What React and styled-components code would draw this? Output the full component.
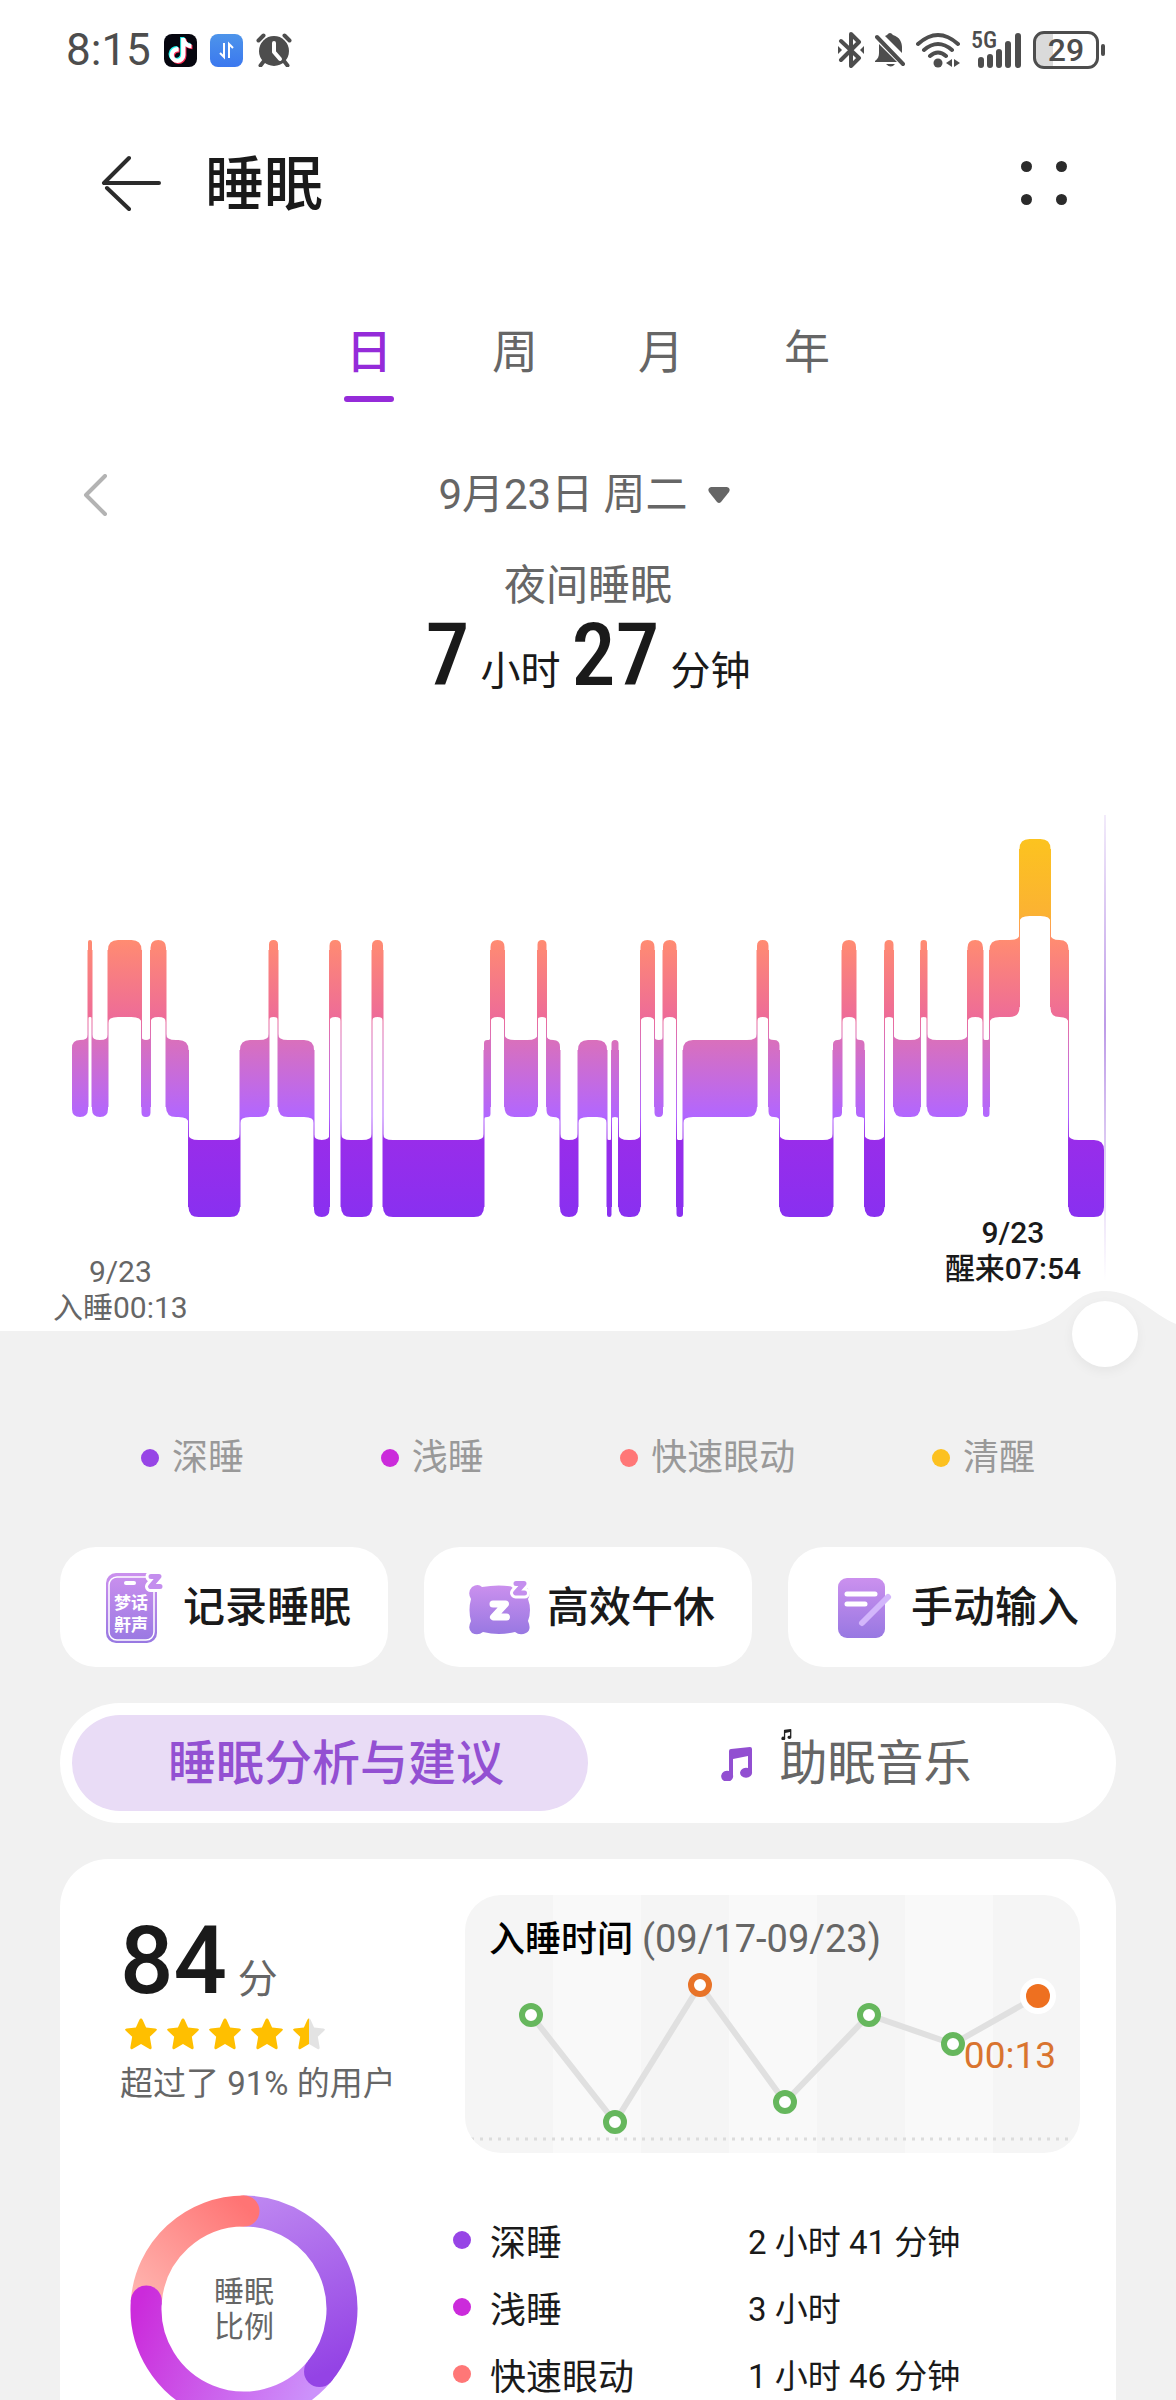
import { useState } from "react";
import styled, { createGlobalStyle, ThemeProvider } from "styled-components";
import { FaTiktok } from "react-icons/fa";

const theme = {
    font: `Roboto, "Noto Sans CJK SC", sans-serif`,
    narrow: `"Roboto Condensed", "Liberation Sans Narrow", Roboto, sans-serif`,
    colors: {
        page: "#f1f1f1",
        panel: "#fff",
        text: "#1a1a1a",
        status: "#4d4d4d",
        muted: "#666",
        faint: "#999",
        accent: "#952bd9",
        pill: "#e9dcf6",
        pillText: "#9350d2",
        deep: "#9745e6",
        light: "#cb2bdb",
        rem: "#ff7777",
        awake: "#fcc120",
    },
};

const GlobalStyle = createGlobalStyle`
    * { box-sizing: border-box; }
    body { margin: 0; }
    button { border: 0; padding: 0; background: none; font: inherit; color: inherit; cursor: pointer; }
    h1, h2, p, dl, dd, dt, ul { margin: 0; padding: 0; font-weight: inherit; }
    svg { display: block; }
`

const Screen = styled.div`
    height: 100vh;
    overflow-y: auto;
    scrollbar-width: none;
    background: ${({ theme }) => theme.colors.page};
    color: ${({ theme }) => theme.colors.text};
    font-family: ${({ theme }) => theme.font};
`
const Panel = styled.div`
    background: ${({ theme }) => theme.colors.panel};
`

/* ---------- status bar ---------- */

const StatusBar = styled.div`
    height: 100px;
    padding: 0 71px 0 66px;
    display: flex;
    align-items: center;
    justify-content: space-between;
    color: ${({ theme }) => theme.colors.status};
`
const StatusGroup = styled.div`
    display: flex;
    align-items: center;
    gap: ${({ $gap }) => $gap}px;
`
const Clock = styled.span`
    font-size: 44px;
    line-height: 48px;
`
const AppBadge = styled.span`
    width: 33px;
    height: 33px;
    border-radius: 8px;
    display: grid;
    place-items: center;
    background: ${({ $bg }) => $bg};
    & > svg { grid-area: 1 / 1; }
`
const Layer = styled(FaTiktok)`
    transform: translate(${({ $shift }) => `${$shift}px, ${$shift}px`});
    width: 25px;
    height: 25px;
`
const Battery = styled.span`
    display: flex;
    align-items: center;
    gap: 2px;
`
const BatteryCell = styled.span`
    width: 66px;
    height: 38px;
    border: 3px solid ${({ theme }) => theme.colors.status};
    border-radius: 11px;
    display: grid;
    place-items: center;
    font-size: 32px;
    line-height: 32px;
    font-weight: 500;
    background: linear-gradient(90deg, #dadada 29%, #fff 29%);
`
const BatteryTip = styled.span`
    width: 4px;
    height: 12px;
    border-radius: 2px;
    background: ${({ theme }) => theme.colors.status};
`

const TikTok = () => (
    <AppBadge $bg="#06060f">
        <Layer $shift={-1} color="#25f4ee" />
        <Layer $shift={1} color="#fe2c55" />
        <Layer $shift={0} color="#fff" />
    </AppBadge>
)

const Transfer = () => (
    <AppBadge $bg="linear-gradient(#4d94ea, #3b78ef)">
        <svg width="33" height="33" viewBox="0 0 33 33" fill="none" stroke="#fff" strokeWidth="2">
            <path d="M14 9v14l-4-4M19 24V10l4 4" />
        </svg>
    </AppBadge>
)

const Alarm = () => (
    <svg width="36" height="34" viewBox="0 0 36 34">
        <circle cx="18" cy="18" r="15" fill="#4d4d4d" />
        <path d="M6.500 6.500 1 12M29.500 6.500 35 12" stroke="#fff" strokeWidth="2" />
        <path d="M2.500 7.500 7.500 2.500M33.500 7.500 28.500 2.500M8 28l-3.500 4.500M28 28l3.500 4.500" stroke="#4d4d4d" strokeWidth="4" strokeLinecap="round" />
        <path d="M18 10v9l6 7" stroke="#fff" strokeWidth="4" strokeLinecap="round" strokeLinejoin="round" fill="none" />
    </svg>
)

const Bluetooth = () => (
    <svg width="26" height="36" viewBox="0 0 26 36" fill="none" stroke="#4d4d4d" strokeWidth="4" strokeLinecap="round" strokeLinejoin="round">
        <path d="M3 9l18 17-8 8V2l8 8L3 28" />
        <path d="M0 14l4 4-4 4zM26 14l-4 4 4 4z" fill="#4d4d4d" stroke="none" />
    </svg>
)

const BellOff = () => (
    <svg width="30" height="36" viewBox="0 0 30 36" fill="#4d4d4d">
        <path d="M12 3q3-4 6 0c7 2 9 8 9 12v6L10 4zM4 12v9c0 3-1 6-4 8v1h22zM11 32h9q-4 5-9 0z" />
        <path d="M2 5l26 27" stroke="#4d4d4d" strokeWidth="4" strokeLinecap="round" />
    </svg>
)

const Wifi = () => (
    <svg width="44" height="36" viewBox="0 0 44 36" fill="none" stroke="#4d4d4d" strokeWidth="4" strokeLinecap="round">
        <path d="M2 12Q22-6 42 12M8 18Q22 6 36 18M14 24Q22 17 30 24" />
        <circle cx="22" cy="31" r="4.500" fill="#4d4d4d" stroke="none" />
        <path d="M36 27v8l-6-4zM38 27v8l6-4z" fill="#4d4d4d" stroke="none" />
    </svg>
)

const SignalBox = styled.span`
    position: relative;
    & > span {
        position: absolute;
        top: -4px;
        left: 0;
        font-family: ${({ theme }) => theme.narrow};
        font-size: 24px;
        line-height: 24px;
        font-weight: 500;
    }
`

const Signal = () => (
    <SignalBox>
        <svg width="51" height="36" viewBox="0 0 51 36">
            <path d="M10 28v5M19 25v8M28 20v13M37 12v21M47 4v29" stroke="#4d4d4d" strokeWidth="6" strokeLinecap="round" />
        </svg>
        <span>5G</span>
    </SignalBox>
)

/* ---------- header ---------- */

const Header = styled.header`
    height: 166px;
    padding: 0 101px;
    display: flex;
    align-items: center;
    gap: 44px;
`
const Title = styled.h1`
    flex: 1;
    padding-top: 4px;
    font-size: 59px;
    line-height: 72px;
    font-weight: 500;
`
const Dots = styled.span`
    display: grid;
    grid-template-columns: 11px 11px;
    gap: 22px 24px;
    padding: 6px 8px;
    & > i { width: 11px; height: 11px; border-radius: 50%; background: #2b2b2b; }
`

/* ---------- tabs and date ---------- */

const Tabs = styled.nav`
    padding-top: 54px;
    display: flex;
    justify-content: center;
    gap: 96px;
`
const Tab = styled.button`
    width: 50px;
    font-size: 46px;
    line-height: 64px;
    font-weight: ${({ $active }) => ($active ? 500 : 400)};
    color: ${({ theme, $active }) => ($active ? theme.colors.accent : theme.colors.muted)};
    &::after {
        content: "";
        display: block;
        height: 6px;
        margin-top: 12px;
        border-radius: 3px;
        background: ${({ $active }) => ($active ? "currentColor" : "transparent")};
    }
`
const DateRow = styled.div`
    margin-top: 63px;
    padding: 0 90px 0 82px;
    height: 60px;
    display: grid;
    grid-template-columns: 26px 1fr 26px;
    align-items: center;
    color: ${({ theme }) => theme.colors.muted};
`
const DateButton = styled.button`
    display: flex;
    align-items: center;
    justify-content: center;
    gap: 20px;
    font-size: 42px;
    line-height: 60px;
`
const Summary = styled.section`
    padding-top: 31px;
    height: 286px;
    text-align: center;
`
const SummaryLabel = styled.h2`
    font-size: 42px;
    line-height: 60px;
    color: ${({ theme }) => theme.colors.muted};
`
const Duration = styled.p`
    display: flex;
    justify-content: center;
    align-items: baseline;
    gap: 11px;
    font-size: 40px;
    line-height: 78px;
`
const BigNumber = styled.strong`
    font-family: ${({ theme }) => theme.narrow};
    font-size: 88px;
    font-weight: 500;
`

/* ---------- stage chart ---------- */

const ChartBox = styled.section`
    position: relative;
`
const ChartLabel = styled.p`
    position: absolute;
    top: ${({ $top }) => $top}px;
    font-size: 30px;
    line-height: 36px;
    text-align: center;
`
const StartLabel = styled(ChartLabel)`
    left: 53px;
    color: ${({ theme }) => theme.colors.muted};
`
const EndLabel = styled(ChartLabel)`
    right: 95px;
    font-weight: 500;
`
const Handle = styled.button`
    position: absolute;
    right: 38px;
    bottom: -36px;
    width: 66px;
    height: 66px;
    border-radius: 50%;
    background: #fff;
    box-shadow: 0 4px 12px rgba(0, 0, 0, 0.05);
`

const STAGE_TOP = { awake: 28, rem: 129, light: 229, deep: 329 };
const STAGE_HEIGHT = 77;
const START_X = 72;

// [stage, right edge]; each block begins where the previous one ends
const stages = [
    ["light", 88], ["rem", 92], ["light", 108], ["rem", 141.500], ["light", 150.500], ["rem", 166],
    ["light", 188.500], ["deep", 240], ["light", 269], ["rem", 278], ["light", 314], ["deep", 329.500],
    ["rem", 341], ["deep", 372], ["rem", 383], ["deep", 484], ["light", 490.500], ["rem", 504.500],
    ["light", 537.500], ["rem", 546.500], ["light", 560], ["deep", 578], ["light", 607], ["deep", 611.500],
    ["light", 618.500], ["deep", 640.500], ["rem", 654.500], ["light", 663], ["rem", 676.500], ["deep", 683],
    ["light", 757], ["rem", 768.500], ["light", 779.500], ["deep", 833], ["light", 842], ["rem", 856],
    ["light", 864.500], ["deep", 884.500], ["rem", 893.500], ["light", 920.500], ["rem", 927], ["light", 967.500],
    ["rem", 983], ["light", 989.500], ["rem", 1019.500], ["awake", 1050.500], ["rem", 1068.500], ["deep", 1104],
];

const blocks = stages.map(([stage, x1], i) => ({
    x0: i ? stages[i - 1][1] : START_X,
    x1,
    top: STAGE_TOP[stage],
}));

// Free corners are rounded inwards, corners next to a connector flare towards it
const blockPath = ({ x0, x1, top }, prev, next) => {
    const r = Math.min(10, (x1 - x0) / 2);
    const flare = Math.min(6, r * 0.7);
    const bottom = top + STAGE_HEIGHT;
    const topY = (side) => (side && side.top < top ? top - flare : top + r);
    const bottomY = (side) => (side && side.top > top ? bottom + flare : bottom - r);
    return `M${x0} ${topY(prev)}Q${x0} ${top} ${x0 + r} ${top}H${x1 - r}Q${x1} ${top} ${x1} ${topY(next)}`
        + `V${bottomY(next)}Q${x1} ${bottom} ${x1 - r} ${bottom}H${x0 + r}Q${x0} ${bottom} ${x0} ${bottomY(prev)}Z`;
}

const StageChart = () => (
    <svg width="100%" viewBox="0 0 1176 520">
        <defs>
            <linearGradient id="stage" gradientUnits="userSpaceOnUse" x1="0" y1="28" x2="0" y2="405">
                <stop offset="0" stopColor="#fcc31f" />
                <stop offset="0.2" stopColor="#fbb233" />
                <stop offset="0.27" stopColor="#ff8b72" />
                <stop offset="0.47" stopColor="#ee6c97" />
                <stop offset="0.535" stopColor="#d970bc" />
                <stop offset="0.735" stopColor="#b266ff" />
                <stop offset="0.8" stopColor="#982dea" />
                <stop offset="1" stopColor="#8930f0" />
            </linearGradient>
            <linearGradient id="cursor" x1="0" y1="0" x2="0" y2="1">
                <stop offset="0" stopColor="#a87ae0" stopOpacity="0.15" />
                <stop offset="0.45" stopColor="#a87ae0" stopOpacity="0.75" />
                <stop offset="1" stopColor="#a87ae0" stopOpacity="0" />
            </linearGradient>
        </defs>
        {blocks.slice(1).map((b, i) => {
            const top = Math.min(b.top, blocks[i].top) + 10;
            const bottom = Math.max(b.top, blocks[i].top) + STAGE_HEIGHT - 10;
            return <rect key={b.x0} x={b.x0 - 0.5} y={top} width="1" height={bottom - top} fill="url(#stage)" />
        })}
        <path fill="url(#stage)" d={blocks.map((b, i) => blockPath(b, blocks[i - 1], blocks[i + 1])).join("")} />
        <rect x="1104" y="4" width="2" height="466" fill="url(#cursor)" />
        <path fill="#f1f1f1" d="M0 520H1000C1072 520 1064 480 1105 480C1136 480 1152 503 1176 513V521H0Z" />
    </svg>
)

/* ---------- legend and shortcuts ---------- */

const Legend = styled.ul`
    list-style: none;
    margin: 103px 0 65px;
    padding: 0 141px;
    display: flex;
    justify-content: space-between;
    font-size: 36px;
    line-height: 48px;
    color: ${({ theme }) => theme.colors.faint};
`
const LegendItem = styled.li`
    display: flex;
    align-items: center;
    gap: 13px;
`
const Dot = styled.i`
    width: 18px;
    height: 18px;
    border-radius: 50%;
    background: ${({ theme, $stage }) => theme.colors[$stage]};
`
const Shortcuts = styled.div`
    padding: 0 60px;
    display: grid;
    grid-template-columns: repeat(3, 1fr);
    gap: 36px;
`
const Shortcut = styled.button`
    height: 120px;
    padding-top: 2px;
    border-radius: 36px;
    background: #fff;
    display: flex;
    align-items: center;
    justify-content: center;
    gap: 14px;
    font-size: 42px;
    line-height: 60px;
    font-weight: 500;
`

const LilacFill = () => (
    <linearGradient id="lilac" x1="0" y1="0" x2="0" y2="1">
        <stop offset="0" stopColor="#cb90ee" />
        <stop offset="1" stopColor="#9878e2" />
    </linearGradient>
)

const SmallZ = ({ d }) => (
    <g fill="none" strokeLinejoin="round" strokeLinecap="round">
        <path d={d} stroke="#fff" strokeWidth="11" />
        <path d={d} stroke="#c48eee" strokeWidth="5" />
    </g>
)

const RecordIcon = () => (
    <svg width="72" height="72" viewBox="0 0 72 72">
        <LilacFill />
        <rect x="9" y="1" width="51" height="70" rx="10" fill="url(#lilac)" />
        <rect x="12" y="5" width="45" height="63" rx="8" fill="none" stroke="#fff" strokeWidth="1.500" />
        <rect x="27" y="9" width="12" height="4" rx="2" fill="#fff" />
        <SmallZ d="M54 4.500H62L53.500 14.500H63" />
        <g fill="#fff" fontSize="17" fontWeight="700" textAnchor="middle" fontFamily="Noto Sans CJK SC">
            <text x="34" y="37">梦话</text>
            <text x="34" y="59">鼾声</text>
        </g>
    </svg>
)

const NapIcon = () => (
    <svg width="72" height="72" viewBox="0 0 72 72">
        <path d="M21 15Q38 12 54 15Q62 10 67 17Q70 22 67 27Q71 38 67 49Q71 58 65 61Q59 64 54 60Q38 64 22 60Q17 64 11 61Q6 57 10 49Q7 38 10 27Q6 20 11 15Q17 11 21 15Z" fill="url(#lilac)" />
        <path d="M32 32H44.500L32.500 45H45.500" fill="none" stroke="#fff" strokeWidth="7" strokeLinejoin="round" strokeLinecap="round" />
        <SmallZ d="M55 11.500H63L54.500 21H63.500" />
    </svg>
)

const ManualIcon = () => (
    <svg width="72" height="72" viewBox="0 0 72 72" strokeLinecap="round">
        <rect x="13" y="6" width="47" height="60" rx="9" fill="url(#lilac)" />
        <path d="M22 22h28M22 32h18" stroke="#fff" strokeWidth="5" />
        <path d="M37 51 63 25" stroke="#d3b6fb" strokeWidth="6" />
    </svg>
)

const Note = ({ size, color }) => (
    <svg width={size} height={size} viewBox="0 0 30 34">
        <path fill={color} d="M7 4Q7 2 9 2L28 0Q30 0 30 2V25A6 5 0 1 1 26 21V9L11 12V28A6 5.500 0 1 1 7 24Z" />
    </svg>
)

/* ---------- segmented switch ---------- */

const Segments = styled.div`
    margin: 36px 60px;
    padding: 12px;
    border-radius: 60px;
    background: #fff;
    display: grid;
    grid-template-columns: 1fr 1fr;
`
const Segment = styled.button`
    height: 96px;
    border-radius: 48px;
    display: flex;
    align-items: center;
    justify-content: center;
    gap: 25px;
    font-size: 48px;
    line-height: 72px;
    padding: ${({ $active }) => ($active ? "2px 0 0 12px" : "2px 0 0")};
    font-weight: ${({ $active }) => ($active ? 500 : 400)};
    color: ${({ theme, $active }) => ($active ? theme.colors.pillText : theme.colors.muted)};
    background: ${({ theme, $active }) => ($active ? theme.colors.pill : "transparent")};
`
const NotedText = styled.span`
    position: relative;
    & > svg { position: absolute; left: 2px; top: 1px; }
`

/* ---------- analysis card ---------- */

const Card = styled.section`
    margin: 0 60px;
    padding: 36px 36px 36px 60px;
    border-radius: 48px;
    background: #fff;
    display: grid;
    grid-template-columns: 309px 1fr;
    gap: 42px 36px;
`
const Score = styled.div`
    padding-top: 18px;
`
const ScoreLine = styled.p`
    display: flex;
    align-items: baseline;
    gap: 11px;
    height: 90px;
    font-size: 40px;
    line-height: 96px;
    color: ${({ theme }) => theme.colors.muted};
    & > strong {
        font-size: 94px;
        font-weight: 500;
        color: ${({ theme }) => theme.colors.text};
    }
`
const Stars = styled.div`
    display: flex;
    gap: 8px;
    padding: 14px 4px 9px;
`
const ScoreNote = styled.p`
    font-size: 33px;
    line-height: 48px;
    white-space: nowrap;
    color: ${({ theme }) => theme.colors.muted};
`
const Trend = styled.div`
    position: relative;
    border-radius: 36px;
    overflow: hidden;
    background: #f5f5f5;
`
const TrendTitle = styled.h2`
    position: absolute;
    top: 20px;
    left: 24px;
    font-size: 36px;
    line-height: 48px;
    font-weight: 500;
    color: #000;
    white-space: nowrap;
    & > span {
        font-size: 38px;
        font-weight: 400;
        color: ${({ theme }) => theme.colors.muted};
    }
`
const DonutBox = styled.div`
    display: grid;
    place-items: center;
    width: 228px;
    margin-left: 10px;
    & > * { grid-area: 1 / 1; }
`
const DonutLabel = styled.p`
    font-size: 30px;
    line-height: 35px;
    text-align: center;
    color: ${({ theme }) => theme.colors.muted};
`
const Breakdown = styled.dl`
    padding: 11px 0 0 12px;
    margin-left: -24px;
`
const BreakdownRow = styled.div`
    display: grid;
    grid-template-columns: 295px 1fr;
    align-items: center;
    height: 67px;
    & > dt {
        display: flex;
        align-items: center;
        gap: 19px;
        font-size: 36px;
    }
    & > dd { font-size: 33px; }
`

const STAR = "M16 1.500Q17 1.500 17.600 2.800L20.800 9.800 29.500 10.800Q32 11.200 30.300 13L24.300 18.600 26 28.500Q26.200 31 24 30L16 25.300 8 30Q5.800 31 6 28.500L7.700 18.600 1.700 13Q0 11.200 2.500 10.800L11.200 9.800 14.400 2.800Q15 1.500 16 1.500Z";

const Star = ({ half }) => (
    <svg width="34" height="34" viewBox="0 0 32 32">
        <linearGradient id="half">
            <stop offset="0.5" stopColor="#ffbf00" />
            <stop offset="0.5" stopColor="#e3e3e3" />
        </linearGradient>
        <path d={STAR} fill={half ? "url(#half)" : "#ffbf00"} />
    </svg>
)

const nights = [
    { x: 66, y: 120 },
    { x: 150, y: 227 },
    { x: 235, y: 90, late: true },
    { x: 320, y: 207 },
    { x: 404, y: 120 },
    { x: 488, y: 149 },
    { x: 573, y: 101, late: true },
];

const TrendChart = () => {
    const last = nights[nights.length - 1];
    return (
        <svg width="100%" viewBox="0 0 615 258">
            {[1, 3, 5].map((n) => <rect key={n} x={n * 88} y="0" width="88" height="258" fill="#f9f9f9" />)}
            <path d="M6 244H612" stroke="#dcdcdc" strokeWidth="3" strokeDasharray="3 6" />
            <polyline points={nights.map((n) => `${n.x},${n.y}`).join(" ")} fill="none" stroke="#e0e0e0" strokeWidth="6" />
            {nights.slice(0, -1).map((n) => (
                <circle key={n.x} cx={n.x} cy={n.y} r="9" fill="#fff" strokeWidth="6" stroke={n.late ? "#e87328" : "#66b75d"} />
            ))}
            <circle cx={last.x} cy={last.y} r="18" fill="#fff" />
            <circle cx={last.x} cy={last.y} r="12" fill="#ee7020" />
            <text x="591" y="173" textAnchor="end" fontSize="37" fill="#d9742f">00:13</text>
        </svg>
    )
}

const RADIUS = 98;
const point = (share) => {
    const a = share * 2 * Math.PI;
    return [114 + RADIUS * Math.sin(a), 114 - RADIUS * Math.cos(a)];
}

const slices = [
    { id: "sDeep", from: 0, to: 0.360, a: "#bf89f1", b: "#9443e5", line: [114, 0, 190, 180] },
    { id: "sLight", from: 0.360, to: 0.763, a: "#cc92fb", b: "#cb2bdb", line: [190, 180, 10, 105] },
    { id: "sRem", from: 0.763, to: 1, a: "#ffb3ae", b: "#ff7474", line: [20, 110, 114, 10] },
];

const Donut = () => (
    <svg width="228" height="228" viewBox="0 0 228 228" fill="none">
        {slices.map(({ id, from, to, a, b, line: [x1, y1, x2, y2] }) => {
            const [sx, sy] = point(from);
            const [ex, ey] = point(to);
            return (
                <g key={id}>
                    <linearGradient id={id} gradientUnits="userSpaceOnUse" x1={x1} y1={y1} x2={x2} y2={y2}>
                        <stop offset="0" stopColor={a} />
                        <stop offset="1" stopColor={b} />
                    </linearGradient>
                    <path d={`M${sx} ${sy}A${RADIUS} ${RADIUS} 0 0 1 ${ex} ${ey}`} stroke={`url(#${id})`} strokeWidth="31" />
                </g>
            )
        })}
        {slices.map(({ id, to }) => {
            const [cx, cy] = point(to);
            return <circle key={id} cx={cx} cy={cy} r="15.500" fill={`url(#${id})`} />
        })}
    </svg>
)

const legend = [["deep", "深睡"], ["light", "浅睡"], ["rem", "快速眼动"], ["awake", "清醒"]];
const breakdown = [
    ["deep", "深睡", "2 小时 41 分钟"],
    ["light", "浅睡", "3 小时"],
    ["rem", "快速眼动", "1 小时 46 分钟"],
];

const App = () => {
    const [period, setPeriod] = useState("日");
    const [section, setSection] = useState("analysis");
    return (<ThemeProvider theme={theme}>
        <GlobalStyle />
        <Screen>
            <Panel>
                <StatusBar>
                    <StatusGroup $gap={13}>
                        <Clock>8:15</Clock>
                        <TikTok />
                        <Transfer />
                        <Alarm />
                    </StatusGroup>
                    <StatusGroup $gap={11}>
                        <Bluetooth />
                        <BellOff />
                        <Wifi />
                        <Signal />
                        <Battery>
                            <BatteryCell>29</BatteryCell>
                            <BatteryTip />
                        </Battery>
                    </StatusGroup>
                </StatusBar>
                <Header>
                    <button aria-label="返回">
                        <svg width="60" height="56" viewBox="0 0 60 56" fill="none" stroke="#2b2b2b" strokeWidth="4" strokeLinecap="round" strokeLinejoin="round">
                            <path d="M28 3 3 28H58M6 33 28 54" />
                        </svg>
                    </button>
                    <Title>睡眠</Title>
                    <button aria-label="更多"><Dots><i /><i /><i /><i /></Dots></button>
                </Header>
                <Tabs>
                    {["日", "周", "月", "年"].map((p) => (
                        <Tab key={p} $active={p === period} onClick={() => setPeriod(p)}>{p}</Tab>
                    ))}
                </Tabs>
                <DateRow>
                    <button aria-label="前一天">
                        <svg width="26" height="42" viewBox="0 0 26 42" fill="none" stroke="#b3b3b3" strokeWidth="4" strokeLinecap="round" strokeLinejoin="round">
                            <path d="M23 2 4 21l19 19" />
                        </svg>
                    </button>
                    <DateButton>
                        9月23日 周二
                        <svg width="22" height="17" viewBox="0 0 22 17" fill="#666">
                            <path d="M3 0H19Q23 1 21 5L13 15Q11 17 9 15L1 5Q-1 1 3 0Z" />
                        </svg>
                    </DateButton>
                </DateRow>
                <Summary>
                    <SummaryLabel>夜间睡眠</SummaryLabel>
                    <Duration>
                        <BigNumber>7</BigNumber>小时
                        <BigNumber>27</BigNumber>分钟
                    </Duration>
                </Summary>
                <ChartBox>
                    <StageChart />
                    <StartLabel $top={443}>9/23<br />入睡00:13</StartLabel>
                    <EndLabel $top={404}>9/23<br />醒来07:54</EndLabel>
                    <Handle aria-label="拖动查看" />
                </ChartBox>
            </Panel>
            <Legend>
                {legend.map(([stage, name]) => <LegendItem key={stage}><Dot $stage={stage} />{name}</LegendItem>)}
            </Legend>
            <Shortcuts>
                <Shortcut><RecordIcon />记录睡眠</Shortcut>
                <Shortcut><NapIcon />高效午休</Shortcut>
                <Shortcut><ManualIcon />手动输入</Shortcut>
            </Shortcuts>
            <Segments>
                <Segment $active={section === "analysis"} onClick={() => setSection("analysis")}>睡眠分析与建议</Segment>
                <Segment $active={section === "music"} onClick={() => setSection("music")}>
                    <Note size={34} color="#924fd1" />
                    <NotedText><Note size={11} color="#222" />助眠音乐</NotedText>
                </Segment>
            </Segments>
            <Card>
                <Score>
                    <ScoreLine><strong>84</strong>分</ScoreLine>
                    <Stars><Star /><Star /><Star /><Star /><Star half /></Stars>
                    <ScoreNote>超过了 91% 的用户</ScoreNote>
                </Score>
                <Trend>
                    <TrendChart />
                    <TrendTitle>入睡时间 <span>(09/17-09/23)</span></TrendTitle>
                </Trend>
                <DonutBox>
                    <Donut />
                    <DonutLabel>睡眠<br />比例</DonutLabel>
                </DonutBox>
                <Breakdown>
                    {breakdown.map(([stage, name, time]) => (
                        <BreakdownRow key={stage}>
                            <dt><Dot $stage={stage} />{name}</dt>
                            <dd>{time}</dd>
                        </BreakdownRow>
                    ))}
                </Breakdown>
            </Card>
        </Screen>
    </ThemeProvider>)
}

export default App;
